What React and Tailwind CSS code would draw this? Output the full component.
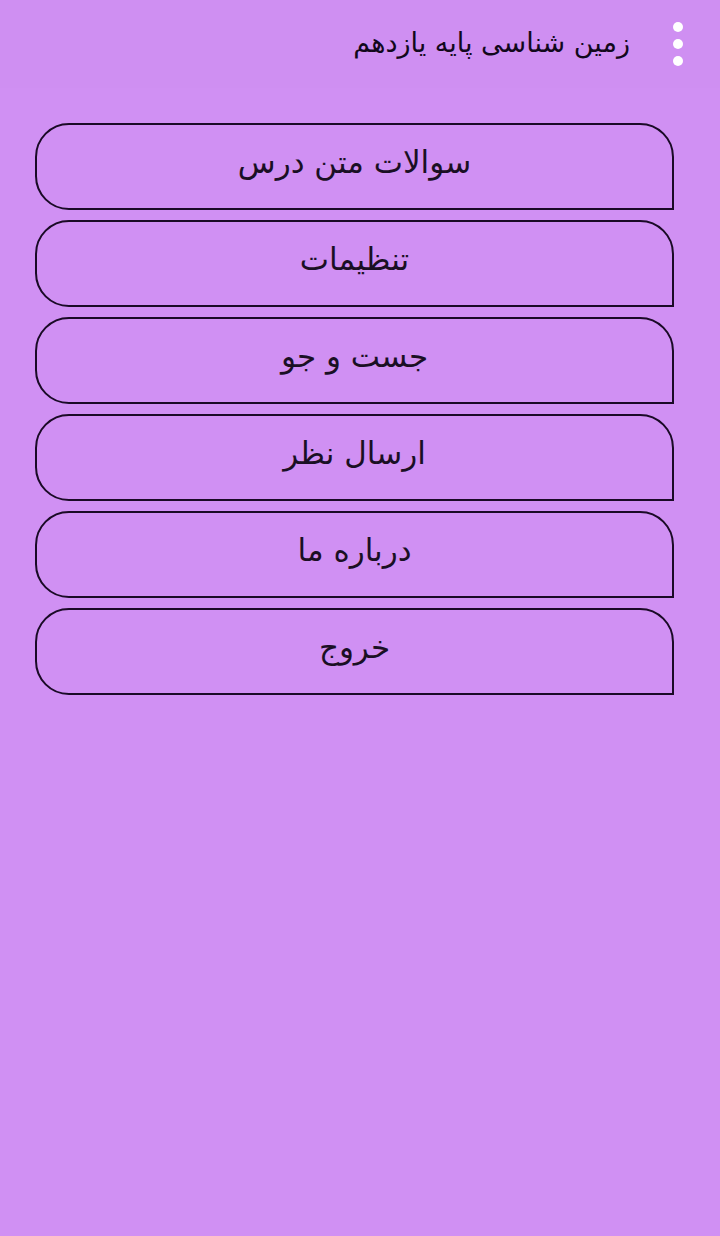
import React from "react";

const items = ["سوالات متن درس", "تنظیمات", "جست و جو", "ارسال نظر", "درباره ما", "خروج"];

const App = () => {
  return (
    <div dir="rtl" className="min-h-[1236px] w-full bg-[#d090f3]" style={{ fontFamily: '"DejaVu Sans", sans-serif' }}>
      {/* toolbar */}
      <header className="h-[88px] flex items-center pr-[34px] pl-2 bg-[#cf8ff2]">
        <div className="flex flex-col gap-[7px] items-center w-[16px]">
          <span className="w-[10px] h-[10px] rounded-full bg-white" />
          <span className="w-[10px] h-[10px] rounded-full bg-white" />
          <span className="w-[10px] h-[10px] rounded-full bg-white" />
        </div>
        <h1 className="mr-[40px] text-[27px] text-[#12081c] leading-none pb-1">زمین شناسی پایه یازدهم</h1>
      </header>

      <div className="flex flex-col gap-[10px] pr-[46px] pl-[35px] pt-[35px]">
        {items.map((t) => (
          <button
            key={t}
            className="h-[87px] w-full border-2 border-[#1a0a26] rounded-tl-[34px] rounded-tr-[34px] rounded-bl-[34px] rounded-br-none flex items-center justify-center text-[31px] text-[#1a0f24] pb-2"
          >
            {t}
          </button>
        ))}
      </div>
    </div>
  );
};

export default App;
